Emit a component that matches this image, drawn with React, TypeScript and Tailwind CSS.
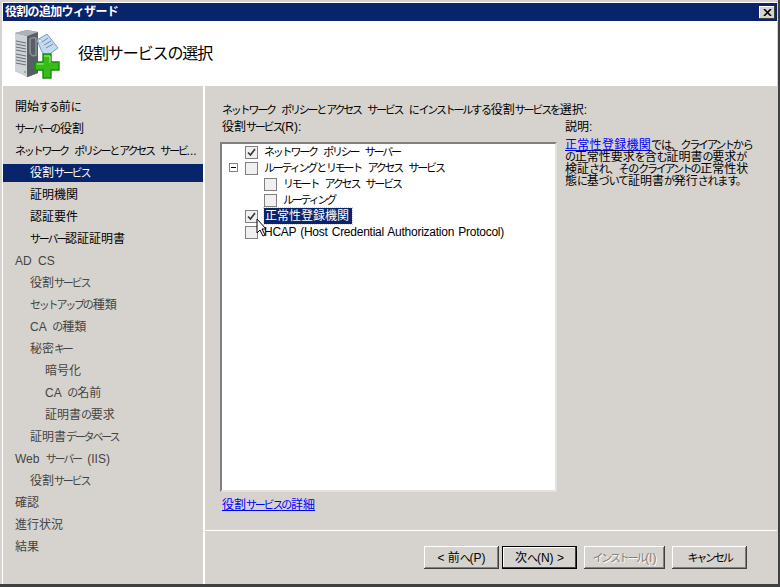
import { ReactNode } from 'react'

const font = "font-['Liberation_Sans','Noto_Sans_CJK_JP',sans-serif]"

const navItems: { label: string; indent: 0 | 1 | 2; active?: boolean; dim?: boolean }[] = [
  { label: '開始する前に', indent: 0 },
  { label: 'サーバーの役割', indent: 0 },
  { label: 'ネットワーク ポリシーとアクセス サービ...', indent: 0 },
  { label: '役割サービス', indent: 1, active: true },
  { label: '証明機関', indent: 1 },
  { label: '認証要件', indent: 1 },
  { label: 'サーバー認証証明書', indent: 1 },
  { label: 'AD CS', indent: 0, dim: true },
  { label: '役割サービス', indent: 1, dim: true },
  { label: 'セットアップの種類', indent: 1, dim: true },
  { label: 'CA の種類', indent: 1, dim: true },
  { label: '秘密キー', indent: 1, dim: true },
  { label: '暗号化', indent: 2, dim: true },
  { label: 'CA の名前', indent: 2, dim: true },
  { label: '証明書の要求', indent: 2, dim: true },
  { label: '証明書データベース', indent: 1, dim: true },
  { label: 'Web サーバー (IIS)', indent: 0, dim: true },
  { label: '役割サービス', indent: 1, dim: true },
  { label: '確認', indent: 0, dim: true },
  { label: '進行状況', indent: 0, dim: true },
  { label: '結果', indent: 0, dim: true },
]

// MS UI Gothic draws kana narrower than kanji, so kana runs get pulled in
function Jp({ text }: { text: string }) {
  const parts = text.split(/([\u30a0-\u30ff]+|[\u3040-\u309f\u3001\u3002]+)/)
  return (
    <>
      {parts.map((part, i) => {
        if (i % 2 === 0) return <span key={i}>{part}</span>
        const katakana = /[\u30a0-\u30ff]/.test(part[0])
        return (
          <span key={i} className={katakana ? 'text-[11px] tracking-[-2.2px]' : 'text-[11px] tracking-[-1.2px]'}>
            {part}
          </span>
        )
      })}
    </>
  )
}

function WizardIcon() {
  return (
    <svg width="46" height="50" viewBox="0 0 46 50">
      <path d="M1 4 L13 1 L24 3 L24 44 L14 48 L1 42 Z" fill="#7d838a" />
      <path d="M1 4 L13 7 L13 48 L1 42 Z" fill="#cfd3d8" />
      <path d="M13 7 L24 3 L24 44 L13 48 Z" fill="#585e66" />
      <path d="M1 4 L13 1 L24 3 L13 7 Z" fill="#aeb3b9" />
      <path d="M2 12 L12 14 M2 15 L12 17 M2 18 L12 20 M2 21 L12 23 M2 25 L12 27 M2 28 L12 30 M2 31 L12 33 M2 34 L12 36" stroke="#6b7077" strokeWidth="1.2" />
      <rect x="10" y="42" width="2" height="2" fill="#6fd13c" />
      <path d="M16 10 Q18 8 22 9 L22 26 Q18 28 16 24 Z" fill="none" stroke="#8d939a" strokeWidth="1.5" />
      <path d="M23 11 L33 5 L44 19 L33 27 L28 23 Z" fill="#c5daf1" stroke="#7f9aba" />
      <path d="M28 13 L34 9 M30 16 L37 12 M32 19 L39 15" stroke="#6f8db3" />
      <circle cx="26" cy="12" r="1.5" fill="#fff" stroke="#7f9aba" strokeWidth="0.5" />
      <path d="M29 25 H37 V33 H45 V41 H37 V49 H29 V41 H21 V33 H29 Z" fill="#38bd18" stroke="#1a8a12" strokeWidth="1.4" />
      <path d="M30 27 H36 V34 M23 35 H30" fill="none" stroke="#a8f07e" />
    </svg>
  )
}

function Check({ checked }: { checked?: boolean }) {
  return (
    <span className="w-[13px] h-[13px] shrink-0 border border-[#808080] bg-[#f1eff2] flex items-center justify-center">
      {checked && (
        <svg width="9" height="9" viewBox="0 0 9 9">
          <path d="M1 4.5 L3.5 7 L8 1" fill="none" stroke="#333" strokeWidth="1.6" />
        </svg>
      )}
    </span>
  )
}

function Row({ children, level, checked }: { children: ReactNode; level: 0 | 1; checked?: boolean }) {
  return (
    <div className={`h-4 flex items-center ${level === 1 ? 'pl-[42px]' : 'pl-[23px]'}`}>
      <Check checked={checked} />
      <span className="ml-[6px] whitespace-nowrap">{children}</span>
    </div>
  )
}

function Button({ label, primary, disabled }: { label: string; primary?: boolean; disabled?: boolean }) {
  return (
    <button
      className={`h-[23px] text-[12px] whitespace-nowrap flex items-center justify-center bg-[#d6d3ce] ${font} ${
        primary
          ? 'border border-black shadow-[inset_-1px_-1px_0_#404040,inset_1px_1px_0_#fff]'
          : 'shadow-[inset_-1px_-1px_0_#404040,inset_1px_1px_0_#fff,inset_-2px_-2px_0_#808080]'
      } ${disabled ? 'w-[81px] text-[#808080] [text-shadow:1px_1px_0_#fff]' : 'w-[75px] text-black'}`}
    >
      <Jp text={label} />
    </button>
  )
}

export default function App() {
  return (
    <div className={`w-[780px] h-[587px] bg-[#d6d3ce] pl-[2px] pt-[2px] pr-px border-r-2 border-b-[3px] border-[#404040] overflow-hidden text-[12px] leading-4 text-black [word-spacing:3px] ${font}`}>
      <div className="h-full flex flex-col border-l border-t border-white">
        <div className="h-[18px] bg-[#08246b] flex items-center justify-between pl-[2px] pr-[2px] shrink-0">
          <span className="text-white font-bold text-[12px] tracking-[-0.7px]">役割の追加ウィザード</span>
          <span className="w-4 h-[13px] bg-[#d6d3ce] flex items-center justify-center shadow-[inset_-1px_-1px_0_#404040,inset_1px_1px_0_#fff]">
            <svg width="9" height="7" viewBox="0 0 9 7">
              <path d="M1 0 L8 7 M8 0 L1 7" stroke="#000" strokeWidth="1.6" />
            </svg>
          </span>
        </div>
        <div className="h-[65px] bg-white flex items-center shrink-0">
          <div className="ml-[11px]"><WizardIcon /></div>
          <h1 className="ml-[18px] text-[16px] font-normal leading-5 tracking-[-1.1px]">役割サービスの選択</h1>
        </div>
        <div className="flex-1 flex min-h-0">
          <nav className="w-[202px] shrink-0 pt-[10px] border-r-2 border-white">
            {navItems.map((item, i) => (
              <div
                key={i}
                className={`flex items-center whitespace-pre ${
                  item.indent === 0 ? 'pl-[12px]' : item.indent === 1 ? 'pl-[27px]' : 'pl-[42px]'
                } ${item.active ? 'bg-[#08246b] text-white h-[18px] my-[2px]' : 'h-[22px]'} ${item.dim ? 'text-[#444]' : ''}`}
              >
                <span><Jp text={item.label} /></span>
              </div>
            ))}
          </nav>
          <div className="flex-1 min-w-0 flex flex-col">
            <div className="flex-1 min-h-0 pl-[17px] pt-[16px]">
              <div className="h-4 whitespace-nowrap"><Jp text="ネットワーク ポリシーとアクセス サービス にインストールする役割サービスを選択:" /></div>
              <div className="flex mt-px">
                <div className="w-[343px] shrink-0">
                  <div className="h-4"><Jp text="役割サービス(R):" /></div>
                  <div className="w-[337px] h-[350px] -ml-[2px] mt-[7px] bg-white border-2 border-t-[#808080] border-l-[#808080] border-r-[#e4e2de] border-b-[#e4e2de]">
                    <Row level={0} checked><Jp text="ネットワーク ポリシー サーバー" /></Row>
                    <div className="relative">
                      <span className="absolute left-[7px] top-[3px] w-[9px] h-[9px] border border-[#808080] flex items-center justify-center">
                        <span className="w-[5px] h-px bg-black" />
                      </span>
                      <Row level={0}><Jp text="ルーティングとリモート アクセス サービス" /></Row>
                    </div>
                    <Row level={1}><Jp text="リモート アクセス サービス" /></Row>
                    <Row level={1}><Jp text="ルーティング" /></Row>
                    <Row level={0} checked>
                      <span className="bg-[#08246b] text-white outline-1 outline-dotted outline-[#d6d3ce] pl-px pr-[3px] py-px">正常性登録機関</span>
                    </Row>
                    <div className="relative">
                      <Row level={0}><span className="tracking-[-0.25px] [word-spacing:1px]">HCAP (Host Credential Authorization Protocol)</span></Row>
                      <svg className="absolute left-[34px] top-[-6px]" width="12" height="20" viewBox="0 0 12 20">
                        <path d="M1 1 L1 15 L4 12 L7 18 L9 17 L6 11 L10 11 Z" fill="#fff" stroke="#000" />
                      </svg>
                    </div>
                  </div>
                  <a className="block mt-[5px] text-[#0000ff] underline"><Jp text="役割サービスの詳細" /></a>
                </div>
                <div className="whitespace-nowrap">
                  <div className="h-4"><Jp text="説明:" /></div>
                  <div className="mt-[4px] leading-[12px]">
                    <div><a className="text-[#0000ff] underline"><span className="tracking-[0.3px]">正常性登録機関</span></a><Jp text="では、クライアントから" /></div>
                    <div><Jp text="の正常性要求を含む証明書の要求が" /></div>
                    <div><Jp text="検証され、そのクライアントの正常性状" /></div>
                    <div><Jp text="態に基づいて証明書が発行されます。" /></div>
                  </div>
                </div>
              </div>
            </div>
            <div className="h-[54px] shrink-0 border-t border-white flex items-start justify-end gap-[7px] pt-[15px] pr-[30px]">
              <div className="flex gap-[3px]">
                <Button label="< 前へ(P)" />
                <Button label="次へ(N) >" primary />
              </div>
              <Button label="インストール(I)" disabled />
              <Button label="キャンセル" />
            </div>
          </div>
        </div>
      </div>
    </div>
  )
}
